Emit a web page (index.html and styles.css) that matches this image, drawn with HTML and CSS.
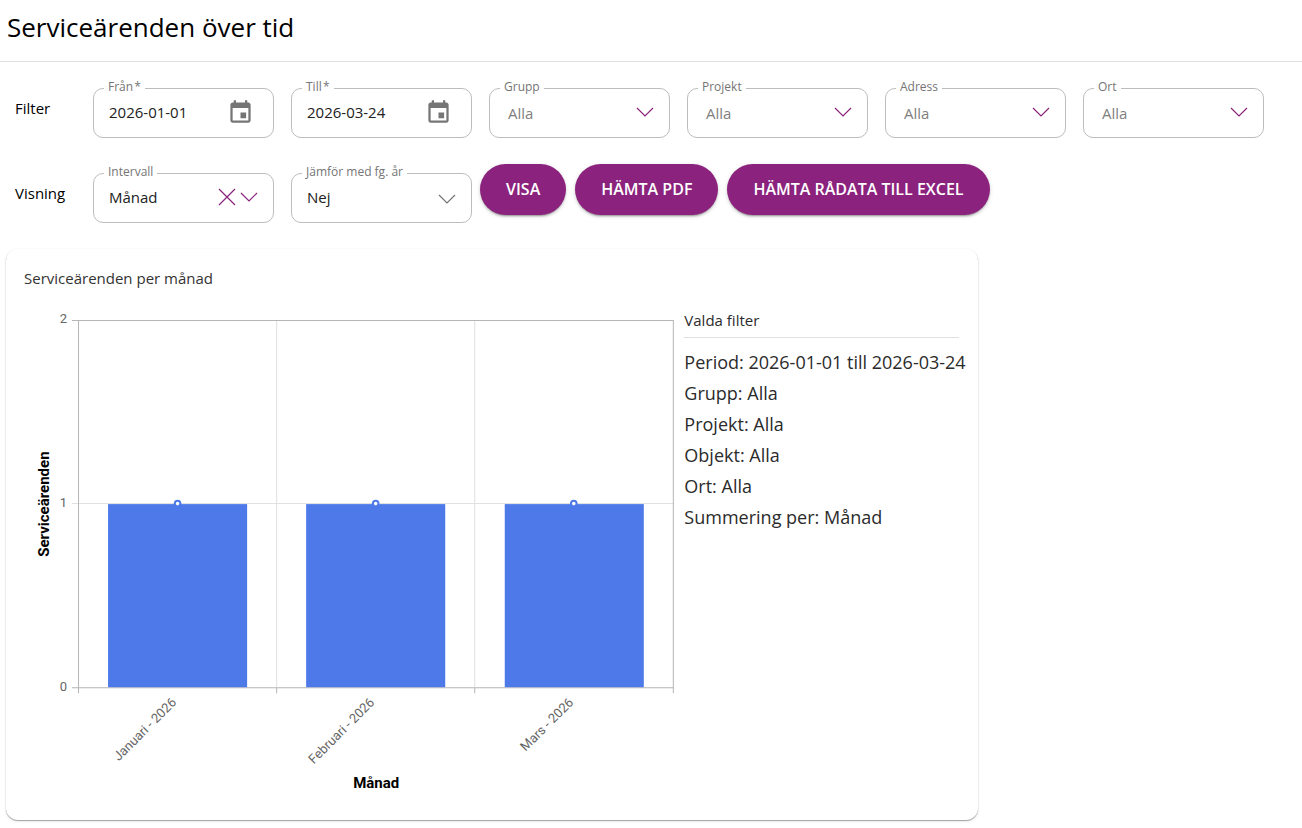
FILE: index.html
```html
<!DOCTYPE html>
<html lang="sv">
    <head>
        <meta charset="utf-8">
        <meta name="viewport" content="width=device-width, initial-scale=1.0">
        <title>Serviceärenden över tid</title>
        <link rel="stylesheet" href="styles.css">
    </head>
    <body>
        <header class="page-header">
            <h1>Serviceärenden över tid</h1>
        </header>

        <form class="filters">
            <div class="row">
                <span class="row-label">Filter</span>
                <div class="fields">
                    <div class="field">
                        <label for="from">Från&#8202;*</label>
                        <input id="from" type="text" value="2026-01-01" required>
                        <button type="button" class="icon-button" aria-label="Välj datum">
                            <svg class="calendar" viewBox="0 0 24 24"><path d="M17 12h-5v5h5v-5zM16 1v2H8V1H6v2H5c-1.11 0-1.99.9-1.99 2L3 19c0 1.1.89 2 2 2h14c1.1 0 2-.9 2-2V5c0-1.1-.9-2-2-2h-1V1h-2zm3 18H5V8h14v11z" /></svg>
                        </button>
                    </div>
                    <div class="field">
                        <label for="to">Till&#8202;*</label>
                        <input id="to" type="text" value="2026-03-24" required>
                        <button type="button" class="icon-button" aria-label="Välj datum">
                            <svg class="calendar" viewBox="0 0 24 24"><path d="M17 12h-5v5h5v-5zM16 1v2H8V1H6v2H5c-1.11 0-1.99.9-1.99 2L3 19c0 1.1.89 2 2 2h14c1.1 0 2-.9 2-2V5c0-1.1-.9-2-2-2h-1V1h-2zm3 18H5V8h14v11z" /></svg>
                        </button>
                    </div>
                    <div class="field empty">
                        <label for="group">Grupp</label>
                        <select id="group"><option>Alla</option></select>
                        <svg class="chevron" viewBox="0 0 16 16"><path d="M0 3l8 8 8-8" /></svg>
                    </div>
                    <div class="field empty">
                        <label for="project">Projekt</label>
                        <select id="project"><option>Alla</option></select>
                        <svg class="chevron" viewBox="0 0 16 16"><path d="M0 3l8 8 8-8" /></svg>
                    </div>
                    <div class="field empty">
                        <label for="address">Adress</label>
                        <select id="address"><option>Alla</option></select>
                        <svg class="chevron" viewBox="0 0 16 16"><path d="M0 3l8 8 8-8" /></svg>
                    </div>
                    <div class="field empty">
                        <label for="city">Ort</label>
                        <select id="city"><option>Alla</option></select>
                        <svg class="chevron" viewBox="0 0 16 16"><path d="M0 3l8 8 8-8" /></svg>
                    </div>
                </div>
            </div>

            <div class="row">
                <span class="row-label">Visning</span>
                <div class="fields">
                    <div class="field">
                        <label for="interval">Intervall</label>
                        <select id="interval"><option>Månad</option></select>
                        <button type="button" class="icon-button clear" aria-label="Rensa">
                            <svg class="chevron" viewBox="0 0 16 16"><path d="M0 0l16 16M16 0L0 16" /></svg>
                        </button>
                        <svg class="chevron" viewBox="0 0 16 16"><path d="M0 4l8 8 8-8" /></svg>
                    </div>
                    <div class="field">
                        <label for="compare">Jämför med fg. år</label>
                        <select id="compare"><option>Nej</option></select>
                        <svg class="chevron gray" viewBox="0 0 16 16"><path d="M0 6l8 8 8-8" /></svg>
                    </div>
                </div>
                <div class="buttons">
                    <button type="button" class="button">VISA</button>
                    <button type="button" class="button">HÄMTA PDF</button>
                    <button type="button" class="button">HÄMTA RÅDATA TILL EXCEL</button>
                </div>
            </div>
        </form>

        <main class="card">
            <h2>Serviceärenden per månad</h2>
            <div class="card-content">
                <svg class="chart" viewBox="0 0 660 500">
                    <!-- grid -->
                    <path class="grid" d="M48 203.5H649M252.5 20V387M450.5 20V387" />
                    <path class="axis" d="M48 20.5H649M48 387.5H649M54.5 20V393M649 20V393M252.5 387V393M450.5 387V393" />

                    <rect class="bar" x="84" y="204" width="139" height="183" />
                    <rect class="bar" x="282" y="204" width="139" height="183" />
                    <rect class="bar" x="480.5" y="204" width="139" height="183" />

                    <circle class="point" cx="153.5" cy="203.5" r="2.8" />
                    <circle class="point" cx="351.5" cy="203.5" r="2.8" />
                    <circle class="point" cx="549.5" cy="203.5" r="2.8" />

                    <text class="tick" x="43" y="23">2</text>
                    <text class="tick" x="43" y="207">1</text>
                    <text class="tick" x="43" y="391">0</text>
                    <text class="tick" transform="translate(153 403) rotate(-45)">Januari - 2026</text>
                    <text class="tick" transform="translate(351 403) rotate(-45)">Februari - 2026</text>
                    <text class="tick" transform="translate(550 403) rotate(-45)">Mars - 2026</text>

                    <text class="axis-title" transform="translate(25 204) rotate(-90)">Serviceärenden</text>
                    <text class="axis-title" x="352" y="488">Månad</text>
                </svg>
                <aside class="summary">
                    <h3>Valda filter</h3>
                    <ul>
                        <li>Period: 2026-01-01 till 2026-03-24</li>
                        <li>Grupp: Alla</li>
                        <li>Projekt: Alla</li>
                        <li>Objekt: Alla</li>
                        <li>Ort: Alla</li>
                        <li>Summering per: Månad</li>
                    </ul>
                </aside>
            </div>
        </main>
    </body>
</html>
```

FILE: styles.css
```css
body{
    margin: 0;
    background: #fff;
    color: #000;
    font-family: "Open Sans", sans-serif;
    font-size: 15px;
}
h1, h2, h3, ul{
    margin: 0;
    padding: 0;
    font-weight: 400;
}
.page-header{
    padding: 9px 7px 16px;
    border-bottom: 1px solid #e0e0e0;
}
h1{
    font-size: 26px;
    line-height: 36px;
}

/* filters */
.filters{
    display: flex;
    flex-direction: column;
    gap: 26px;
    padding: 17px 15px 26px;
}
.row{
    display: flex;
    align-items: flex-start;
}
.row-label{
    flex: 0 0 78px;
    margin-top: 17px;
    line-height: 24px;
}
.fields{
    display: flex;
    flex-wrap: wrap;
    gap: 17px;
    margin-top: 9px;
}
.field{
    position: relative;
    display: flex;
    align-items: center;
    width: 181px;
    height: 50px;
    padding: 0 16px 2px 15px;
    border: 1px solid #bdbdbd;
    border-radius: 10px;
    box-sizing: border-box;
}
.field label{
    position: absolute;
    top: -10px;
    left: 10px;
    padding: 0 4px;
    background: #fff;
    color: #757575;
    font-size: 12px;
    line-height: 16px;
    white-space: nowrap;
}
.field input, .field select{
    flex: 1;
    min-width: 0;
    padding: 0;
    border: 0;
    background: none;
    color: #212121;
    font: inherit;
    line-height: 24px;
    appearance: none;
    outline: none;
}
.field.empty{
    padding: 0 16px 0 18px;
}
.field.empty select{
    color: #808080;
}
.icon-button{
    display: flex;
    margin-right: 3px;
    padding: 0;
    border: 0;
    background: none;
}
.icon-button.clear{
    margin-right: 6px;
}
.calendar{
    width: 27px;
    height: 27px;
    fill: #757575;
}
.chevron{
    width: 16px;
    height: 16px;
    fill: none;
    stroke: #8b237e;
    stroke-width: 1.2;
    overflow: visible;
    pointer-events: none;
}
.chevron.gray{
    stroke: #757575;
}
.buttons{
    display: flex;
    flex-wrap: wrap;
    gap: 9px;
    margin-left: 8px;
}
.button{
    height: 51px;
    padding: 0 26px 2px;
    border: 0;
    border-radius: 26px;
    background: #8b237e;
    color: #fff;
    font-family: inherit;
    font-size: 16px;
    font-weight: 600;
    white-space: nowrap;
    box-shadow: 0 3px 1px -2px rgba(0, 0, 0, .2), 0 2px 2px rgba(0, 0, 0, .14), 0 1px 5px rgba(0, 0, 0, .12);
}

/* chart card */
.card{
    width: calc(75% - 5px);
    margin: 0 6px 6px;
    padding: 17px 18px 20px;
    border-radius: 12px;
    box-sizing: border-box;
    box-shadow: 0 1px 1px rgba(0, 0, 0, .3), 0 1px 3px rgba(0, 0, 0, .12);
}
h2{
    color: #333;
    font-size: 15px;
    line-height: 24px;
}
.card-content{
    display: grid;
    grid-template-columns: minmax(0, 12fr) minmax(0, 5fr);
    margin-top: 10px;
}
.chart{
    display: block;
    width: 100%;
    height: auto;
    font-family: Roboto, sans-serif;
}
.grid{
    fill: none;
    stroke: #e0e0e0;
}
.axis{
    fill: none;
    stroke: #b5b5b5;
}
.bar{
    fill: #4d79e9;
}
.point{
    fill: #fff;
    stroke: #4d79e9;
    stroke-width: 2;
}
.tick{
    fill: #666;
    font-size: 13px;
    text-anchor: end;
}
.axis-title{
    fill: #000;
    font-size: 15px;
    font-weight: 700;
    text-anchor: middle;
}
.summary{
    padding-top: 8px;
    color: #2b2b2b;
}
h3{
    padding-bottom: 5px;
    border-bottom: 1px solid #e0e0e0;
    font-size: 15px;
    line-height: 24px;
}
.summary ul{
    margin-top: 9px;
    list-style: none;
    font-size: 18px;
    line-height: 31px;
    white-space: nowrap;
}
```
